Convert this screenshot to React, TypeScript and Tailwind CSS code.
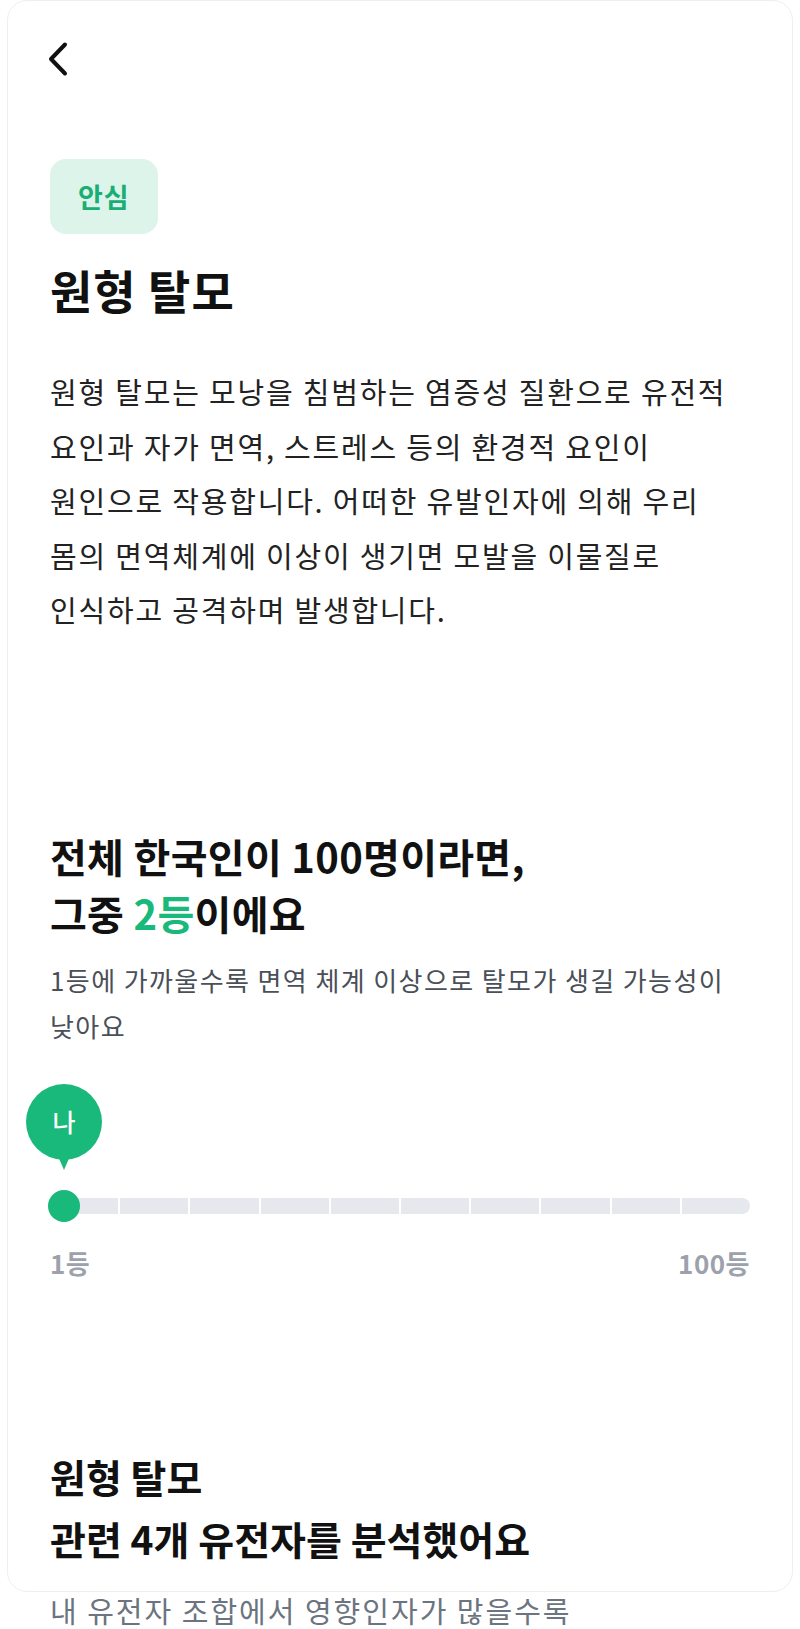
import React from "react";

const GREEN = "#19b87b";

export default function App() {
  const segments = Array.from({ length: 10 }, (_, i) => i);
  return (
    <div
      className="w-[800px] h-[1629px] overflow-hidden bg-white"
      style={{ fontFamily: '"Noto Sans CJK KR", "Noto Sans", sans-serif' }}
    >
      <div className="mx-[7px] border border-[#efefef] rounded-[20px] pt-[40px] pb-[22px] px-[42px]">
        <svg
          width="24"
          height="36"
          viewBox="0 0 24 36"
          className="ml-[-4px] block"
          fill="none"
          stroke="#111111"
          strokeWidth="4"
          strokeLinecap="round"
          strokeLinejoin="round"
        >
          <path d="M19 3.5 L5 18 L19 32.5" />
        </svg>

        <div className="mt-[82px] inline-flex h-[75px] items-center rounded-[16px] bg-[#dcf4ea] px-[28px]">
          <span className="text-[27px] font-bold leading-none tracking-[1px] text-[#1aae75]">안심</span>
        </div>

        <h1 className="mt-[27px] text-[46px] font-bold leading-[56px] tracking-[1px] text-[#111111]">원형 탈모</h1>

        <p className="mt-[47px] text-[29px] leading-[54.5px] tracking-[1.8px] text-[#222222] whitespace-nowrap">
          원형 탈모는 모낭을 침범하는 염증성 질환으로 유전적
          <br />
          요인과 자가 면역, 스트레스 등의 환경적 요인이
          <br />
          원인으로 작용합니다. 어떠한 유발인자에 의해 우리
          <br />
          몸의 면역체계에 이상이 생기면 모발을 이물질로
          <br />
          인식하고 공격하며 발생합니다.
        </p>

        <h2 className="mt-[191px] text-[40px] font-bold leading-[57px] tracking-[0.3px] text-[#111111] whitespace-nowrap">
          전체 한국인이 100명이라면,
          <br />
          그중 <span style={{ color: GREEN }}>2등</span>이에요
        </h2>

        <p className="mt-[15px] text-[26px] leading-[46px] tracking-[1.4px] text-[#4a4f58] whitespace-nowrap">
          1등에 가까울수록 면역 체계 이상으로 탈모가 생길 가능성이
          <br />
          낮아요
        </p>

        <div className="mt-[35px] relative">
          <div className="relative h-[86px] w-[76px] ml-[-24px]">
            <div className="flex h-[76px] w-[76px] items-center justify-center rounded-full bg-[#19b87b]">
              <span className="text-[25px] font-medium leading-none text-white">나</span>
            </div>
            <div className="absolute left-[32px] top-[72px] h-0 w-0 border-l-[6px] border-r-[6px] border-t-[14px] border-l-transparent border-r-transparent border-t-[#19b87b]" />
          </div>

          <div className="mt-[20px] relative flex h-[32px] items-center">
            <div className="grid h-[16px] w-full grid-cols-10 gap-[2px]">
              {segments.map((i) => (
                <div
                  key={i}
                  className={
                    "h-full bg-[#e5e8ec] " +
                    (i === 0 ? "rounded-l-full " : "") +
                    (i === 9 ? "rounded-r-full" : "")
                  }
                />
              ))}
            </div>
            <div className="absolute left-[-2px] top-0 h-[32px] w-[32px] rounded-full bg-[#19b87b]" />
          </div>

          <div className="mt-[26px] flex justify-between text-[26px] font-bold leading-[30px] tracking-[0.5px] text-[#9ca1ab]">
            <span>1등</span>
            <span>100등</span>
          </div>
        </div>

        <h2 className="mt-[167px] text-[39px] font-bold leading-[62px] text-[#111111] whitespace-nowrap">
          원형 탈모
          <br />
          관련 4개 유전자를 분석했어요
        </h2>
      </div>

      <p className="mt-[0px] px-[50px] text-[29px] leading-[36px] tracking-[2px] text-[#6b7480] whitespace-nowrap">
        내 유전자 조합에서 영향인자가 많을수록
      </p>
    </div>
  );
}
